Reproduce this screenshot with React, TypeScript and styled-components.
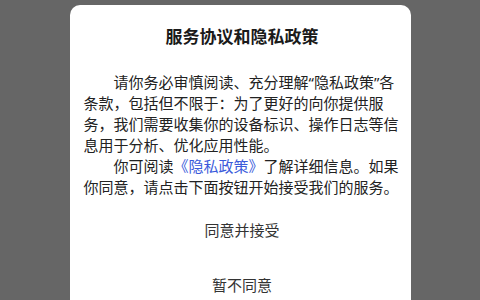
import React from 'react'
import styled, { createGlobalStyle } from 'styled-components'

const GlobalStyle = createGlobalStyle`
  html, body {
    margin: 0;
    padding: 0;
    background: #666666;
    overflow: hidden;
  }
  body {
    font-family: "Noto Sans", "Noto Sans CJK SC", sans-serif;
  }
`;

const Overlay = styled.div`
  width: 480px;
  height: 300px;
  display: flex;
  justify-content: center;
  align-items: flex-start;
  padding-top: 5px;
  box-sizing: border-box;
  overflow: hidden;
`;

const Dialog = styled.div`
  width: 341px;
  background: #ffffff;
  border-radius: 10px;
  padding: 20px 10px 0 14px;
  box-sizing: border-box;
  display: flex;
  flex-direction: column;
`;

const Title = styled.h2`
  margin: 0;
  font-size: 17px;
  line-height: 24px;
  font-weight: 700;
  text-align: center;
  color: #1a1a1a;
`;

const Body = styled.div`
  margin-top: 23px;
  font-size: 15px;
  line-height: 21px;
  color: #222222;
`;

const Paragraph = styled.p`
  margin: 0;
  text-indent: 2em;
`;

const Link = styled.a`
  color: #3b5bdb;
  text-decoration: none;
`;

const Actions = styled.div`
  margin-top: 4px;
  display: flex;
  flex-direction: column;
`;

const ActionButton = styled.button`
  height: 55px;
  padding: 0;
  border: none;
  background: transparent;
  font-family: inherit;
  font-size: 15px;
  color: #333333;
  cursor: pointer;
`;

export default function App() {
  return (
    <>
      <GlobalStyle />
      <Overlay>
        <Dialog>
          <Title>服务协议和隐私政策</Title>
          <Body>
            <Paragraph>
              请你务必审慎阅读、充分理解“隐私政策”各条款，包括但不限于：为了更好的向你提供服务，我们需要收集你的设备标识、操作日志等信息用于分析、优化应用性能。
            </Paragraph>
            <Paragraph>
              你可阅读<Link href="#">《隐私政策》</Link>了解详细信息。如果你同意，请点击下面按钮开始接受我们的服务。
            </Paragraph>
          </Body>
          <Actions>
            <ActionButton>同意并接受</ActionButton>
            <ActionButton>暂不同意</ActionButton>
          </Actions>
        </Dialog>
      </Overlay>
    </>
  );
}
